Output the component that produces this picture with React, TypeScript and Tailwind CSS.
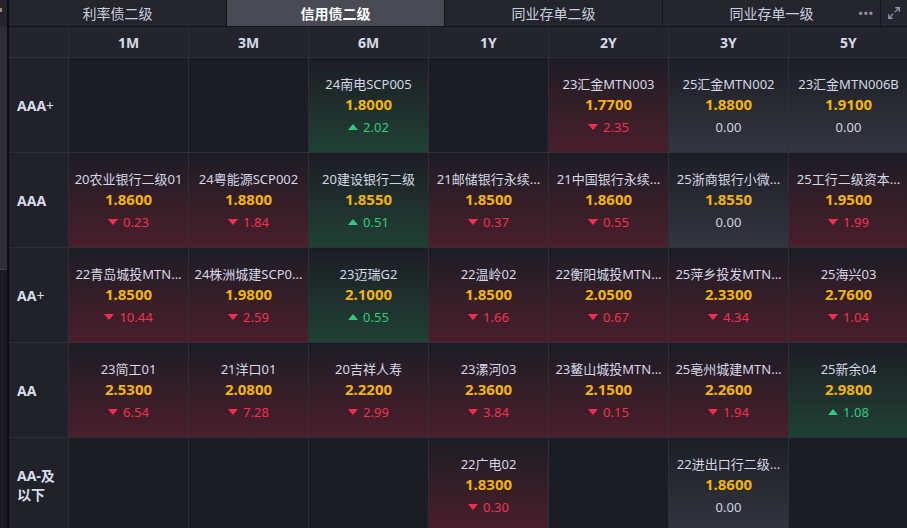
import React from 'react'
import { Maximize2 } from 'lucide-react'

type Cell = { name: string; value: string; change: string; dir: 'up' | 'down' | 'flat' } | null

const tabs = ['利率债二级', '信用债二级', '同业存单二级', '同业存单一级']
const terms = ['1M', '3M', '6M', '1Y', '2Y', '3Y', '5Y']

const rows: { label: React.ReactNode; cells: Cell[] }[] = [
  {
    label: <>AAA<span className="font-normal">+</span></>,
    cells: [
      null,
      null,
      { name: '24南电SCP005', value: '1.8000', change: '2.02', dir: 'up' },
      null,
      { name: '23汇金MTN003', value: '1.7700', change: '2.35', dir: 'down' },
      { name: '25汇金MTN002', value: '1.8800', change: '0.00', dir: 'flat' },
      { name: '23汇金MTN006B', value: '1.9100', change: '0.00', dir: 'flat' },
    ],
  },
  {
    label: 'AAA',
    cells: [
      { name: '20农业银行二级01', value: '1.8600', change: '0.23', dir: 'down' },
      { name: '24粤能源SCP002', value: '1.8800', change: '1.84', dir: 'down' },
      { name: '20建设银行二级', value: '1.8550', change: '0.51', dir: 'up' },
      { name: '21邮储银行永续...', value: '1.8500', change: '0.37', dir: 'down' },
      { name: '21中国银行永续...', value: '1.8600', change: '0.55', dir: 'down' },
      { name: '25浙商银行小微...', value: '1.8550', change: '0.00', dir: 'flat' },
      { name: '25工行二级资本...', value: '1.9500', change: '1.99', dir: 'down' },
    ],
  },
  {
    label: <>AA<span className="font-normal">+</span></>,
    cells: [
      { name: '22青岛城投MTN...', value: '1.8500', change: '10.44', dir: 'down' },
      { name: '24株洲城建SCP0...', value: '1.9800', change: '2.59', dir: 'down' },
      { name: '23迈瑞G2', value: '2.1000', change: '0.55', dir: 'up' },
      { name: '22温岭02', value: '1.8500', change: '1.66', dir: 'down' },
      { name: '22衡阳城投MTN...', value: '2.0500', change: '0.67', dir: 'down' },
      { name: '25萍乡投发MTN...', value: '2.3300', change: '4.34', dir: 'down' },
      { name: '25海兴03', value: '2.7600', change: '1.04', dir: 'down' },
    ],
  },
  {
    label: 'AA',
    cells: [
      { name: '23简工01', value: '2.5300', change: '6.54', dir: 'down' },
      { name: '21洋口01', value: '2.0800', change: '7.28', dir: 'down' },
      { name: '20吉祥人寿', value: '2.2200', change: '2.99', dir: 'down' },
      { name: '23漯河03', value: '2.3600', change: '3.84', dir: 'down' },
      { name: '23鳌山城投MTN...', value: '2.1500', change: '0.15', dir: 'down' },
      { name: '25亳州城建MTN...', value: '2.2600', change: '1.94', dir: 'down' },
      { name: '25新余04', value: '2.9800', change: '1.08', dir: 'up' },
    ],
  },
  {
    label: 'AA-及以下',
    cells: [
      null,
      null,
      null,
      { name: '22广电02', value: '1.8300', change: '0.30', dir: 'down' },
      null,
      { name: '22进出口行二级...', value: '1.8600', change: '0.00', dir: 'flat' },
      null,
    ],
  },
]

function Triangle({ up }: { up: boolean }) {
  return (
    <svg width="10" height="6" viewBox="0 0 10 6" className="mr-[5px]">
      {up ? <polygon points="5,0 10,6 0,6" fill="currentColor" /> : <polygon points="0,0 10,0 5,6" fill="currentColor" />}
    </svg>
  )
}

function DataCell({ c }: { c: Cell }) {
  if (!c) return <div className="border-r border-b border-[#2e2f37] bg-[#1c1d24]" />
  const bg =
    c.dir === 'up'
      ? 'bg-gradient-to-b from-[#1c1d24] to-[#1f4134]'
      : c.dir === 'down'
        ? 'bg-gradient-to-b from-[#1d1c24] to-[#4a1e2b]'
        : 'bg-gradient-to-b from-[#1d1e25] to-[#34353f]'
  const color = c.dir === 'up' ? 'text-[#2fcb7c]' : c.dir === 'down' ? 'text-[#f5304c]' : 'text-[#cfd5e3]'
  return (
    <div className={`border-r border-b border-[#2e2f37] ${bg} flex flex-col items-center justify-center`}>
      <div className="text-[13px] leading-[18px] text-[#d3d8e6] whitespace-nowrap">{c.name}</div>
      <div className="text-[15px] leading-[20px] font-bold text-[#f2b40a] mt-[1px]">{c.value}</div>
      <div className={`flex items-center text-[13px] leading-[18px] mt-[4px] ${color}`}>
        {c.dir !== 'flat' && <Triangle up={c.dir === 'up'} />}
        {c.change}
      </div>
    </div>
  )
}

export default function App() {
  return (
    <div className="w-[907px] h-[528px] overflow-hidden flex bg-[#1c1d24] font-['Noto_Sans','Noto_Sans_CJK_SC',sans-serif]">
      <div className="w-[9px] flex-shrink-0 flex bg-[#24252d]">
        <div className="w-[7px] flex flex-col">
          <div className="h-[27px] flex-shrink-0 bg-[#24252d] pt-[8px]">
            <div className="w-[2px] h-[4px] bg-[#a8875a]" />
          </div>
          <div className="h-[243px] flex-shrink-0 bg-[#2d2e37] rounded-tr-[3px] rounded-br-[2px] border-b border-[#3a3b45]" />
          <div className="flex-1 bg-[#1c1d24]" />
        </div>
        <div className="w-[2px] bg-[#0e0e12]" />
      </div>
      <div className="flex-1 flex flex-col min-w-0">
        <div className="h-[27px] flex-shrink-0 flex bg-[#24252d] border-b border-[#14151a]">
          {tabs.map((t, i) => (
            <div
              key={t}
              className={`flex-1 relative flex items-center justify-center text-[14px] border-r border-[#14151a] ${i === 1 ? 'bg-[#4a4a55] text-white font-bold' : 'text-[#c9cede]'}`}
            >
              {t}
              {i === 3 && (
                <span className="absolute right-[6px] top-[5px] text-[11px] tracking-[1px] text-[#8e93a3] font-bold">•••</span>
              )}
            </div>
          ))}
          <div className="w-[26px] flex items-center justify-center text-[#8c9bb5]">
            <Maximize2 size={14} strokeWidth={2.2} />
          </div>
        </div>
        <div className="flex-shrink-0 grid grid-cols-[60px_repeat(7,120px)] grid-rows-[31px_repeat(5,95px)]">
          <div className="border-r border-b border-[#2e2f37] bg-[#23242c]" />
          {terms.map(t => (
            <div key={t} className="border-r border-b border-[#2e2f37] bg-[#23242c] flex items-center justify-center text-[14px] font-bold text-[#d6dbe8]">
              {t}
            </div>
          ))}
          {rows.map((r, ri) => (
            <React.Fragment key={ri}>
              <div className="border-r border-b border-[#2e2f37] bg-[#202129] flex items-center pl-[8px] pr-[6px] text-[14px] leading-[19px] font-bold text-[#d8ddea]">
                <span className="break-all">{r.label}</span>
              </div>
              {r.cells.map((c, ci) => (
                <DataCell key={ci} c={c} />
              ))}
            </React.Fragment>
          ))}
        </div>
      </div>
    </div>
  )
}
